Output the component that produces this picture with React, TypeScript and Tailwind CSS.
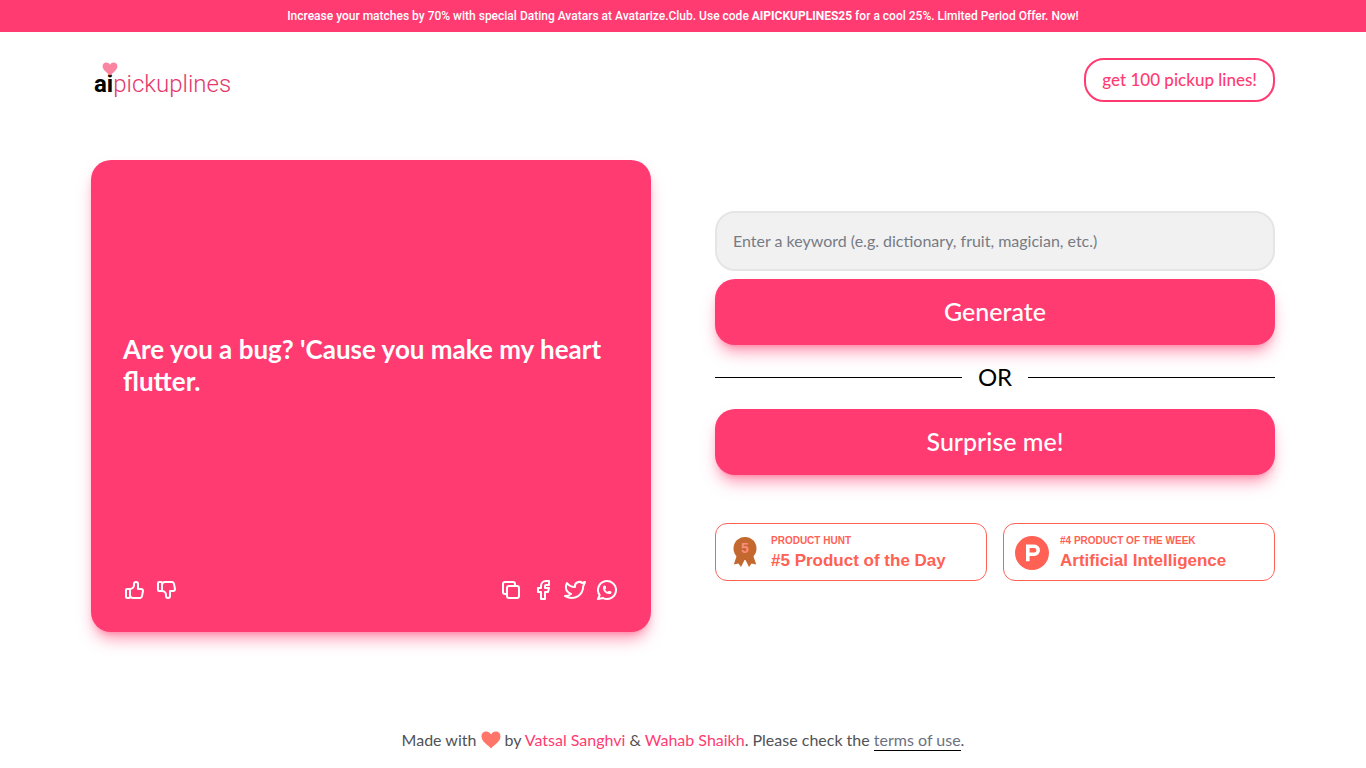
import React from 'react';
import {
    TbThumbUp,
    TbThumbDown,
    TbBrandFacebook,
    TbBrandTwitter,
    TbBrandWhatsapp,
} from 'react-icons/tb';

const CopyIcon = () => (
    <svg
        className="h-6 w-6"
        viewBox="0 0 24 24"
        fill="none"
        stroke="currentColor"
        strokeWidth="2"
        strokeLinecap="round"
        strokeLinejoin="round"
        aria-hidden="true"
    >
        <rect x="8" y="8" width="12" height="12" rx="2" />
        <path d="M16 8v-2a2 2 0 0 0 -2 -2h-8a2 2 0 0 0 -2 2v8a2 2 0 0 0 2 2h2" />
    </svg>
);

const HeartIcon = ({ className, fill }: { className: string; fill: string }) => (
    <svg className={className} viewBox="0 0 20 18" aria-hidden="true">
        <path
            fill={fill}
            d="M10 17.5C8.800 16 6.500 14.200 4.300 12.200 2 10 .5 8 .5 5.400.5 2.600 2.600.600 5.200.600c2 0 3.800 1.100 4.800 3 1-1.900 2.800-3 4.800-3 2.600 0 4.700 2 4.700 4.800 0 2.600-1.500 4.600-3.800 6.800-2.200 2-4.500 3.800-5.700 5.300z"
        />
    </svg>
);

const MedalIcon = () => (
    <svg className="h-8 w-6 shrink-0" viewBox="0 0 24 32" aria-hidden="true">
        <path fill="#c3692f" d="M4 18L.8 27.500l4.600-1L8 30l4-8 4 8 2.600-3.500 4.600 1L20 18z" />
        <circle cx="12" cy="11.500" r="11.500" fill="#c3692f" />
        <text
            x="12"
            y="16"
            textAnchor="middle"
            fill="#ff8b7c"
            className="font-['Liberation_Sans',sans-serif] text-[14px] font-bold"
        >
            5
        </text>
    </svg>
);

const ProductHuntIcon = () => (
    <svg className="h-[34px] w-[34px] shrink-0" viewBox="0 0 34 34" aria-hidden="true">
        <circle cx="17" cy="17" r="17" fill="#ff6154" />
        <path
            fill="#fff"
            fillRule="evenodd"
            d="M11 8.500h8.300a5.700 5.700 0 0 1 0 11.400H14.600v5.300H11zM14.600 12v4.500h4.600a2.250 2.250 0 0 0 0-4.500z"
        />
    </svg>
);

interface BadgeProps {
    label: string;
    title: string;
    icon: React.ReactNode;
    className: string;
}

const Badge: React.FC<BadgeProps> = ({ label, title, icon, className }) => (
    <a
        href="#"
        className={`flex h-[58px] items-center rounded-xl border border-[#ff6154] pt-px font-['Liberation_Sans',sans-serif] font-bold text-[#ff6154] ${className}`}
    >
        {icon}
        <span className="flex flex-col">
            <span className="text-[10px] leading-4">{label}</span>
            <span className="text-[17px] leading-6">{title}</span>
        </span>
    </a>
);

const bigButton =
    'h-[66px] w-full rounded-[20px] bg-[#ff3b72] text-[25px] font-medium text-white shadow-lg shadow-[#ff3b72]/50';

export default function App() {
    return (
        <div className="min-h-screen bg-white font-[Lato,sans-serif] text-black">
            {/* Promo banner */}
            <a href="#" className="block bg-[#ff3b72] px-4 py-2 text-center font-[Roboto,sans-serif] text-[12px] leading-4 font-medium text-white">
                Increase your matches by 70% with special Dating Avatars at Avatarize.Club. Use code{' '}
                <strong className="font-bold">AIPICKUPLINES25</strong> for a cool 25%. Limited Period Offer. Now!
            </a>

            <div className="mx-auto max-w-7xl px-12">
                <header className="flex h-24 items-center justify-between">
                    <a href="#" className="relative flex items-baseline pt-2 pl-[3px] font-[Roboto,sans-serif] text-2xl leading-8">
                        <HeartIcon className="absolute top-0.5 left-[11px] h-[14px] w-4" fill="#fb84a0" />
                        <span className="font-bold">ai</span>
                        <span className="font-light text-[#e5376b]">pickuplines</span>
                    </a>
                    <button className="h-11 rounded-[20px] border-2 border-[#ff3b72] px-4 text-[17px] font-medium text-[#ff3b72]">
                        get 100 pickup lines!
                    </button>
                </header>

                <main className="grid grid-cols-2 gap-16 pt-8">
                    {/* Pickup line card */}
                    <section className="flex min-h-[472px] flex-col rounded-[20px] bg-[#ff3b72] px-8 pt-8 pb-[30px] text-white shadow-lg shadow-[#ff3b72]/50">
                        <div className="flex flex-1 items-center pb-10">
                            <p className="text-[26px] leading-8 font-bold">Are you a bug? 'Cause you make my heart flutter.</p>
                        </div>
                        <div className="flex justify-between">
                            <div className="flex gap-2">
                                <button aria-label="Like"><TbThumbUp className="h-6 w-6" /></button>
                                <button aria-label="Dislike"><TbThumbDown className="h-6 w-6" /></button>
                            </div>
                            <div className="flex gap-2">
                                <button aria-label="Copy"><CopyIcon /></button>
                                <button aria-label="Share on Facebook"><TbBrandFacebook className="h-6 w-6" /></button>
                                <button aria-label="Share on Twitter"><TbBrandTwitter className="h-6 w-6" /></button>
                                <button aria-label="Share on WhatsApp"><TbBrandWhatsapp className="h-6 w-6" /></button>
                            </div>
                        </div>
                    </section>

                    {/* Generator */}
                    <section className="flex flex-col justify-center">
                        <input
                            type="text"
                            aria-label="Keyword"
                            placeholder="Enter a keyword (e.g. dictionary, fruit, magician, etc.)"
                            className="mb-2 h-[60px] w-full rounded-[20px] border-2 border-[#e5e5e5] bg-[#f1f1f1] px-4 pb-0.5 text-base placeholder:text-[#777b84]"
                        />
                        <button className={bigButton}>Generate</button>
                        <div className="flex items-center gap-4 py-4 text-2xl">
                            <span className="h-px flex-1 bg-black" />
                            <span>OR</span>
                            <span className="h-px flex-1 bg-black" />
                        </div>
                        <button className={bigButton}>Surprise me!</button>
                        <div className="mt-12 grid grid-cols-2 gap-4">
                            <Badge
                                label="PRODUCT HUNT"
                                title="#5 Product of the Day"
                                icon={<MedalIcon />}
                                className="gap-[14px] pl-[17px]"
                            />
                            <Badge
                                label="#4 PRODUCT OF THE WEEK"
                                title="Artificial Intelligence"
                                icon={<ProductHuntIcon />}
                                className="gap-[11px] pl-[11px]"
                            />
                        </div>
                    </section>
                </main>

                <footer className="mt-24 text-center text-base text-[#505256]">
                    Made with <HeartIcon className="inline h-[18px] w-5 align-[-3px]" fill="#ff7569" /> by{' '}
                    <a href="#" className="text-[#ff3b72]">Vatsal Sanghvi</a> &amp;{' '}
                    <a href="#" className="text-[#ff3b72]">Wahab Shaikh</a>. Please check the{' '}
                    <a href="#" className="border-b border-black pb-px text-gray-500">terms of use</a>.
                </footer>
            </div>
        </div>
    );
}
